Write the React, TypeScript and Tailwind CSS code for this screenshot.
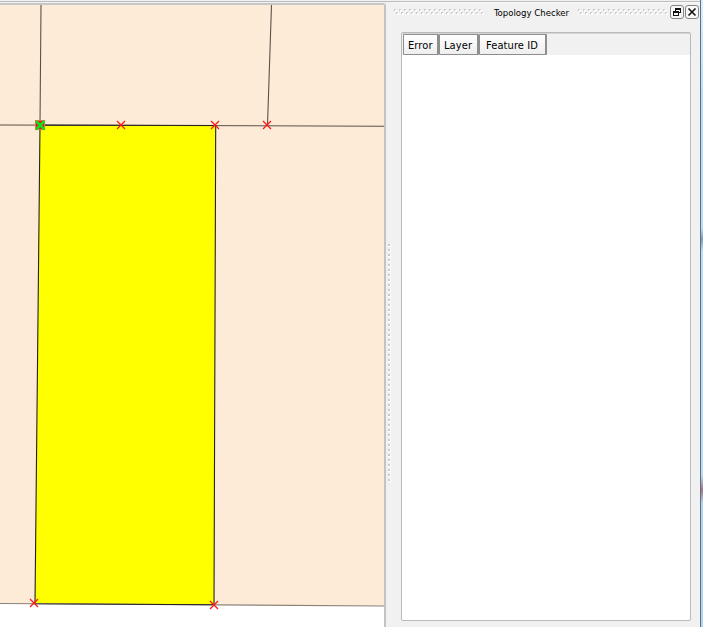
import React from 'react';

const vertices = [
  [121, 125],
  [215, 125],
  [267, 125],
  [34, 603],
  [214, 605],
];

function MapCanvas() {
  return (
    <svg className="block h-[622px] w-[384px]" viewBox="0 5 384 622">
      <rect y="5" width="384" height="622" fill="#fff" />
      <path d="M0 5H384V605.8L0 603.3Z" fill="#feebd7" />
      <path d="M40 125L216 125.5L214 604.5L35 603.5Z" fill="#ff0" />
      <g fill="none" stroke="#5a5147" strokeWidth="1.1">
        <path d="M41 5L40 125M271.5 5L267.5 125" />
        <path d="M0 125L384 126.2" />
        <path d="M0 603.5L384 606" stroke="#8b8176" />
      </g>
      <path d="M40 125L215.7 125.5L214 604.8L35 603.7Z" fill="none" stroke="#222" strokeWidth="1.1" />
      <g stroke="#f51c18" strokeWidth="1.25">
        {vertices.map(([x, y]) => (
          <path key={x} d={`M${x - 4} ${y - 4}l8 8m0 -8l-8 8`} />
        ))}
      </g>
      <rect x="35.5" y="120.5" width="9" height="9" fill="#f51414" stroke="#ee6b54" />
      <path d="M36 121L44.5 129.5M44.5 121L36 129.5" stroke="#0de01c" strokeWidth="2.6" />
    </svg>
  );
}

function TitleGrip() {
  return (
    <svg className="h-[6px] w-[90px]" shapeRendering="crispEdges">
      {Array.from({ length: 18 }, (_, i) => (
        <g key={i} transform={`translate(${i * 5} 0)`}>
          <path d="M1 1h2v2h-2zM3 4h2v2h-2z" fill="#fff" />
          <path d="M0 0h2v1h-1v1h-1zM2 3h2v1h-1v1h-1z" fill="#cbcbcb" />
        </g>
      ))}
    </svg>
  );
}

function SplitterGrip() {
  return (
    <svg className="mt-[241px] ml-[2px] h-[240px] w-[3px]" shapeRendering="crispEdges">
      {Array.from({ length: 48 }, (_, i) => (
        <g key={i} transform={`translate(0 ${i * 5})`}>
          <path d="M0 0h3v3h-3z" fill="#fff" />
          <path d="M0 0h2v2h-2z" fill="#cacaca" />
        </g>
      ))}
    </svg>
  );
}

function DockButton({ label, children }: { label: string; children: React.ReactNode }) {
  return (
    <button
      aria-label={label}
      className="flex h-[14px] w-[14px] items-center justify-center rounded-[3px] border border-[#858585] bg-[#f7f7f7]"
    >
      <svg className="h-[10px] w-[10px] shrink-0" viewBox="0 0 10 10" shapeRendering="crispEdges">
        {children}
      </svg>
    </button>
  );
}

function HeaderCell({ className, children }: { className: string; children: string }) {
  return (
    <div
      className={`flex h-[21px] shrink-0 items-center rounded-[1px] border border-r-2 border-[#8e8e8e] bg-linear-to-b from-white to-[#eeeeee] pt-[2px] text-[11px] leading-[13px] tracking-[0.1px] whitespace-nowrap text-black ${className}`}
    >
      {children}
    </div>
  );
}

export default function App() {
  return (
    <div className="flex h-[627px] w-[703px] overflow-hidden bg-[#f1f1f1] font-['DejaVu_Sans_Condensed','DejaVu_Sans',sans-serif] [font-stretch:condensed]">
      <div className="flex w-[700px] shrink-0 flex-col">
        <div className="h-[2px] shrink-0 border-b border-[#bcbcbc]" />
        <div className="flex h-[625px]">
          <div className="mt-px h-[624px] w-[386px] shrink-0 rounded-tr-[3px] border-t-2 border-r-2 border-t-[#c6c8c8] border-r-[#c3c3c3]">
            <MapCanvas />
          </div>
          <div className="w-[8px] shrink-0 pt-px">
            <SplitterGrip />
          </div>
          <div className="flex w-[306px] flex-col border-t border-[#fafafa]">
            <div className="flex h-[18px] items-center">
              <TitleGrip />
              <div className="w-[94px] pt-px pl-[10px] text-[9.5px] leading-[12px] whitespace-nowrap text-black">
                <span>Topology Checker</span>
              </div>
              <TitleGrip />
              <div className="ml-[2px] flex gap-px">
                <DockButton label="Float panel">
                  <path d="M3 1h6v5h-2v-1h1v-2h-4v1h-1zM1 4h6v5h-6zM2 6v2h4v-2z" fill="#111" fillRule="evenodd" />
                </DockButton>
                <DockButton label="Close panel">
                  <path d="M1.5 1.5L8.5 8.5M8.5 1.5L1.5 8.5" stroke="#111" strokeWidth="1.6" shapeRendering="auto" />
                </DockButton>
              </div>
            </div>
            <div className="mt-[11px] ml-[7px] h-[589px] w-[290px] rounded-[2px] border border-[#b9b9b9] bg-white">
              <div className="flex h-[22px] border-t border-[#d5d5d5] bg-[#f1f1f1] pl-px">
                <HeaderCell className="w-[36px] pl-1">Error</HeaderCell>
                <HeaderCell className="w-[40px] pl-1">Layer</HeaderCell>
                <HeaderCell className="w-[68px] pl-[6px]">Feature ID</HeaderCell>
              </div>
            </div>
          </div>
        </div>
      </div>
      <div className="w-px bg-[#53738c]" />
      <div className="w-[2px] bg-[linear-gradient(to_bottom,#dceefa_0px,#b8dcf7_100px,#badcf5_228px,#8199b8_239px,#badcf7_251px,#bcdcf5_475px,#a0747f_490px,#b5d1ec_503px,#b0d4f2_627px)]" />
    </div>
  );
}
